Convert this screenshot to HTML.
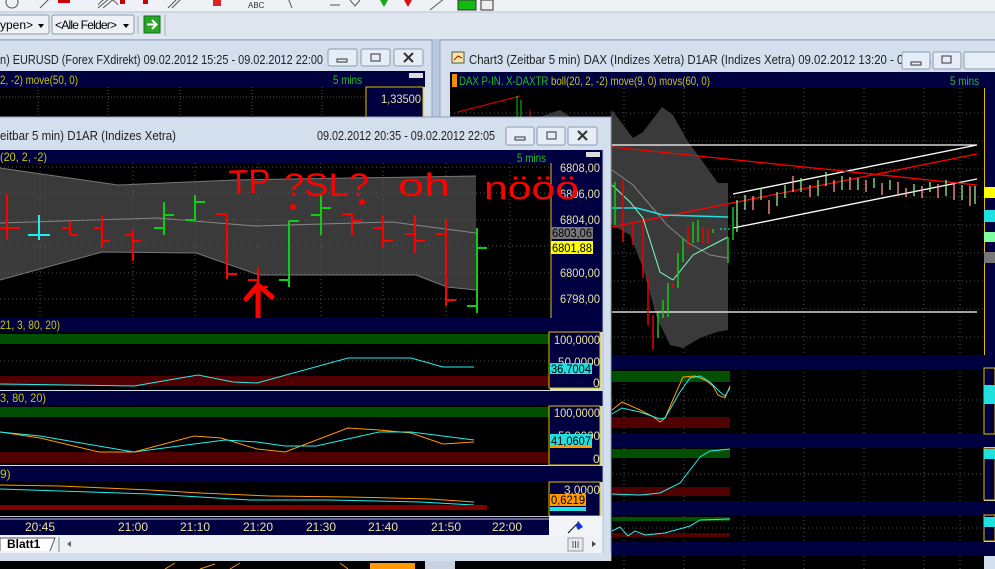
<!DOCTYPE html>
<html><head><meta charset="utf-8"><style>
html,body{margin:0;padding:0;background:#b9c9dc;}
svg{display:block;font-family:"Liberation Sans",sans-serif;}
</style></head><body>
<svg width="995" height="569" viewBox="0 0 995 569" xmlns="http://www.w3.org/2000/svg">
<!-- toolbar -->
<rect x="0" y="0" width="995" height="12" fill="#eef1f5"/>
<g stroke="#555" stroke-width="1" fill="none">
<circle cx="12" cy="2" r="6"/>
<path d="M40 8 L50 -2 M98 8 L110 -2 M103 8 L115 -2 M168 8 L178 -2 M172 8 L182 -2 M288 -2 L292 8 M330 5 L340 5 M350 0 L355 6 L360 0 M430 10 L445 -2"/>
<path d="M98 5 Q108 -8 118 5"/>
</g>
<rect x="58" y="0" width="12" height="3" fill="#c00"/>
<rect x="120" y="0" width="5" height="4" fill="#c00"/>
<rect x="143" y="0" width="5" height="4" fill="#c00"/>
<rect x="213" y="0" width="8" height="6" fill="#d22"/>
<text x="248" y="8" font-size="8" fill="#333">ABC</text>
<path d="M380 0 L388 0 L384 7Z" fill="#1a1"/><path d="M404 0 L412 0 L408 7Z" fill="#d11"/>
<rect x="458" y="0" width="18" height="10" fill="#11bb11" stroke="#333"/>
<rect x="481" y="0" width="12" height="10" fill="#eee" stroke="#333"/>
<rect x="0" y="12" width="995" height="27" fill="#dfe6ef"/>
<line x1="0" y1="12" x2="995" y2="12" fill="none" stroke="#b8c2d0"/>
<rect x="-5" y="15" width="54" height="19" rx="2" fill="#eef1f5" stroke="#8e9aaa"/>
<text x="0" y="29" font-size="12" fill="#000">ypen&gt;</text>
<path d="M38 24 L44 24 L41 28Z" fill="#000"/>
<rect x="52" y="15" width="82" height="19" rx="2" fill="#eef1f5" stroke="#8e9aaa"/>
<text x="55" y="29" font-size="12" fill="#000" textLength="62">&lt;Alle Felder&gt;</text>
<path d="M123 24 L129 24 L126 28Z" fill="#000"/>
<line x1="138" y1="16" x2="138" y2="34" stroke="#a9b3c0"/>
<rect x="144" y="16" width="16" height="17" fill="#2aa52a" stroke="#1a6a1a"/>
<path d="M147 24.5 L156 24.5 M152 20 L156.5 24.5 L152 29" stroke="#fff" stroke-width="2" fill="none"/>
<line x1="165" y1="14" x2="165" y2="36" stroke="#a9b3c0"/>

<!-- back left window -->
<rect x="-5" y="40" width="437" height="90" fill="#d3dfed" stroke="#8fa4c0"/>
<text x="0" y="64" font-size="12.5" fill="#222" textLength="323" lengthAdjust="spacingAndGlyphs">n)  EURUSD (Forex FXdirekt) 09.02.2012 15:25 - 09.02.2012 22:00</text>
<g fill="#e6edf6" stroke="#8c9bb0"><rect x="328" y="49" width="29" height="17" rx="2"/><rect x="361" y="49" width="29" height="17" rx="2"/><rect x="394" y="49" width="29" height="17" rx="2"/></g>
<rect x="337" y="59" width="10" height="3" fill="none" stroke="#333"/>
<rect x="371" y="54" width="9" height="7" fill="none" stroke="#333"/>
<path d="M404 53 L413 62 M413 53 L404 62" stroke="#333" stroke-width="2"/>
<rect x="0" y="71" width="425" height="16" fill="#000040"/>
<text x="0" y="84" font-size="12" fill="#c8c800" textLength="78" lengthAdjust="spacingAndGlyphs">2, -2) move(50, 0)</text>
<text x="333" y="84" font-size="12" fill="#20c020" textLength="29" lengthAdjust="spacingAndGlyphs">5 mins</text>
<rect x="409" y="73" width="14" height="5" fill="#ddd"/>
<rect x="0" y="87" width="366" height="33" fill="#000"/>
<rect x="366" y="87" width="57" height="33" fill="#000040" stroke="#d8c000"/>
<text x="381" y="103" font-size="12" fill="#e8e0a0" textLength="40" lengthAdjust="spacingAndGlyphs">1,33500</text>
<g stroke="#555" stroke-dasharray="1,2"><line x1="0" y1="97" x2="366" y2="97"/><line x1="38" y1="87" x2="38" y2="117"/><line x1="108" y1="87" x2="108" y2="117"/><line x1="180" y1="87" x2="180" y2="117"/><line x1="252" y1="87" x2="252" y2="117"/><line x1="322" y1="87" x2="322" y2="117"/></g>

<!-- right window -->
<rect x="440" y="40" width="560" height="530" fill="#d3dfed" stroke="#8fa4c0"/>
<rect x="452" y="52" width="12" height="11" fill="#f4e9a0" stroke="#555"/><path d="M454 60 L458 56 L462 58" stroke="#c00" fill="none"/>
<text x="469" y="64" font-size="12.5" fill="#222" textLength="466" lengthAdjust="spacingAndGlyphs">Chart3 (Zeitbar 5 min)  DAX (Indizes Xetra) D1AR (Indizes Xetra) 09.02.2012 13:20 - 09.02...</text>
<g fill="#e6edf6" stroke="#8c9bb0"><rect x="902" y="52" width="28" height="17" rx="2"/><rect x="933" y="52" width="28" height="17" rx="2"/><rect x="964" y="52" width="35" height="17" rx="2"/></g>
<rect x="911" y="62" width="10" height="3" fill="none" stroke="#333"/>
<rect x="942" y="56" width="9" height="7" fill="none" stroke="#333"/>
<rect x="450" y="72" width="545" height="16" fill="#000040"/>
<rect x="452" y="74" width="5" height="13" fill="#f09000"/>
<text x="459" y="85" font-size="12" fill="#20c020" textLength="251" lengthAdjust="spacingAndGlyphs">DAX P-IN. X-DAXTR <tspan fill="#c8c800">boll(20, 2, -2) move(9, 0) movs(60, 0)</tspan></text>
<text x="950" y="85" font-size="12" fill="#20c020" textLength="29" lengthAdjust="spacingAndGlyphs">5 mins</text>
<rect x="450" y="88" width="534" height="481" fill="#000"/>
<rect x="984" y="88" width="11" height="268" fill="#000040"/>
<line x1="984.5" y1="88" x2="984.5" y2="356" stroke="#e0c000"/>
<g stroke="#555" stroke-dasharray="1,3">
<line x1="624" y1="88" x2="624" y2="569"/><line x1="684" y1="88" x2="684" y2="569"/><line x1="744" y1="88" x2="744" y2="569"/><line x1="804" y1="88" x2="804" y2="569"/><line x1="864" y1="88" x2="864" y2="569"/><line x1="924" y1="88" x2="924" y2="569"/><line x1="960" y1="88" x2="960" y2="569"/>
<line x1="450" y1="113" x2="984" y2="113"/><line x1="450" y1="141" x2="984" y2="141"/><line x1="450" y1="169" x2="984" y2="169"/><line x1="450" y1="197" x2="984" y2="197"/><line x1="450" y1="225" x2="984" y2="225"/><line x1="450" y1="253" x2="984" y2="253"/><line x1="450" y1="281" x2="984" y2="281"/><line x1="450" y1="309" x2="984" y2="309"/><line x1="450" y1="337" x2="984" y2="337"/>
<line x1="612" y1="400" x2="984" y2="400"/><line x1="612" y1="474" x2="984" y2="474"/><line x1="612" y1="528" x2="984" y2="528"/>
</g>
<path d="M458 112 L520 96" stroke="#e00" fill="none"/>
<path d="M517 96 V117 M521 100 V117" stroke="#1c1"/>
<path d="M530 110 V117" stroke="#e00"/>
<polygon points="540,117 560,110 575,120 590,138 605,140 612,110 633,138 643,132 662,107 673,115 687,140 703,162 718,183 728,183 728,330 717,332 700,338 683,348 670,345 657,318 643,268 630,235 612,225" fill="#3a3a3a"/>
<path d="M612 170 L633 185 L650 205 L667 225 L687 242 L710 255 L728 258" stroke="#888" fill="none"/>
<path d="M612 145 L977 145 M612 312 L977 312 M733 194 L977 145 M733 228 L977 179" stroke="#fff" stroke-width="1.3" fill="none"/>
<path d="M612 147 L977 185 M612 227 L977 154" stroke="#f00" stroke-width="1.3" fill="none"/>
<path d="M612 208 L637 208 L663 215 L728 217" stroke="#20e0e0" stroke-width="1.5" fill="none"/>
<path d="M612 185 L630 202 L643 218 L660 272 L673 280 L693 255 L728 237" stroke="#7fffc0" fill="none"/>
<g stroke="#e00" stroke-width="1.5"><path d="M623 180V242 M633 222V245 M643 222V278 M648 278V325 M653 315V350 M673 283V288 M688 225V248 M703 227V243 M708 228V244"/></g>
<g stroke="#1c1" stroke-width="1.5"><path d="M615 182V225 M658 313V338 M663 300V318 M668 283V317 M678 253V288 M683 238V262 M693 222V243 M698 220V242 M713 229V233 M728 237V263 M733 207V240"/></g>
<path d="M720 229h2M724 229h2M728 229h2" stroke="#0ff"/>
<g stroke="#8fef8f" stroke-width="1.3" fill="none"><path d="M737 200V232 M745 195V210 M761 188V200 M777 192V206 M785 185V198 M801 178V192 M818 180V196 M826 172V186 M842 176V190 M858 178V190 M874 178V188 M890 180V190 M914 184V196 M930 182V192 M946 180V196 M962 185V200 M975 186V204"/></g>
<g stroke="#ff9a9a" stroke-width="1.3" fill="none"><path d="M753 196V210 M769 200V214 M793 176V192 M810 185V197 M834 180V192 M850 177V190 M866 180V192 M882 183V195 M898 182V196 M906 188V197 M922 186V198 M938 184V198 M954 184V200 M970 186V206"/></g>
<rect x="984" y="187" width="11" height="11" fill="#ff0"/><rect x="984" y="210" width="11" height="12" fill="#20e0e0"/><rect x="984" y="232" width="11" height="10" fill="#7fffa0"/><rect x="984" y="252" width="11" height="11" fill="#777"/>
<!-- right lower panels -->
<rect x="612" y="355" width="383" height="14" fill="#000040"/>
<rect x="612" y="371" width="118" height="11" fill="#005000"/><rect x="612" y="417" width="118" height="11" fill="#500000"/>
<rect x="612" y="433" width="383" height="14" fill="#000040"/>
<rect x="612" y="449" width="118" height="9" fill="#005000"/><rect x="612" y="487" width="118" height="9" fill="#500000"/>
<rect x="612" y="501" width="383" height="14" fill="#000040"/>
<rect x="612" y="517" width="118" height="4" fill="#005000"/><rect x="612" y="533" width="118" height="4" fill="#500000"/>
<rect x="612" y="542" width="383" height="14" fill="#000040"/>
<path d="M612 410 L622 402 L640 410 L652 416 L660 422 L665 418 L675 395 L683 377 L695 376 L705 380 L713 386 L718 395 L725 398 L730 386" stroke="#f90" fill="none"/>
<path d="M612 414 L622 408 L640 412 L660 419 L665 418 L680 392 L690 378 L700 376 L710 382 L720 392 L725 396 L730 388" stroke="#2ee" fill="none"/>
<path d="M612 494 L640 495 L660 493 L680 483 L690 470 L700 457 L710 451 L730 449" stroke="#2ee" fill="none"/>
<path d="M612 531 L620 527 L628 536 L635 531 L645 535 L665 533 L690 526 L700 520 L730 519" stroke="#2ee" fill="none"/>
<rect x="984" y="368" width="11" height="66" fill="#000040" stroke="#e0c000"/>
<rect x="984" y="385" width="11" height="19" fill="#20e0e0"/>
<rect x="984" y="448" width="11" height="52" fill="#000040" stroke="#e0c000"/>
<rect x="984" y="449" width="11" height="10" fill="#20e0e0"/>
<rect x="984" y="515" width="11" height="26" fill="#000040" stroke="#e0c000"/>
<rect x="984" y="517" width="11" height="10" fill="#20e0e0"/>

<!-- front window -->
<rect x="-6" y="117" width="617" height="444" fill="#d3dfed" stroke="#8fa4c0"/>
<text x="0" y="140" font-size="12.5" fill="#222" textLength="176" lengthAdjust="spacingAndGlyphs">eitbar 5 min)  D1AR (Indizes Xetra)</text>
<text x="317" y="140" font-size="12.5" fill="#222" textLength="178" lengthAdjust="spacingAndGlyphs">09.02.2012 20:35 - 09.02.2012 22:05</text>
<g fill="#e6edf6" stroke="#8c9bb0"><rect x="506" y="127" width="28" height="18" rx="2"/><rect x="537" y="127" width="28" height="18" rx="2"/><rect x="568" y="127" width="29" height="18" rx="2"/></g>
<rect x="515" y="137" width="10" height="3" fill="none" stroke="#333"/>
<rect x="547" y="132" width="9" height="7" fill="none" stroke="#333"/>
<path d="M578 131 L587 140 M587 131 L578 140" stroke="#333" stroke-width="2"/>
<rect x="0" y="150" width="603" height="14" fill="#000040"/>
<text x="0" y="161" font-size="12" fill="#c8c800" textLength="47" lengthAdjust="spacingAndGlyphs">(20, 2, -2)</text>
<text x="517" y="162" font-size="12" fill="#20c020" textLength="29" lengthAdjust="spacingAndGlyphs">5 mins</text>
<rect x="586" y="152" width="14" height="5" fill="#ddd"/>
<rect x="0" y="163" width="550" height="155" fill="#000"/>
<polygon points="0,168 118,185 235,180 476,176 476,290 447,287 416,275 259,275 196,253 102,252 0,280" fill="#3a3a3a"/>
<path d="M0 168 L118 185 L235 180 L476 176 M0 280 L102 252 L196 253 L259 275 L416 275 L447 287 L476 290" stroke="#777" fill="none"/>
<path d="M0 223 L157 218 L255 226 L392 222 L476 233" stroke="#888" fill="none"/>
<g stroke="#555" stroke-dasharray="1,3">
<line x1="0" y1="167" x2="550" y2="167"/><line x1="0" y1="193" x2="550" y2="193"/><line x1="0" y1="220" x2="550" y2="220"/><line x1="0" y1="246" x2="550" y2="246"/><line x1="0" y1="273" x2="550" y2="273"/><line x1="0" y1="299" x2="550" y2="299"/>
<line x1="40" y1="163" x2="40" y2="516"/><line x1="133" y1="163" x2="133" y2="516"/><line x1="195" y1="163" x2="195" y2="516"/><line x1="258" y1="163" x2="258" y2="516"/><line x1="321" y1="163" x2="321" y2="516"/><line x1="383" y1="163" x2="383" y2="516"/><line x1="446" y1="163" x2="446" y2="516"/><line x1="510" y1="163" x2="510" y2="516"/>
</g>
<g stroke="#f00" stroke-width="2" fill="none">
<path d="M7 194V240 M7 228H20 M0 228H7"/>
<path d="M70 221V235 M62 228H70 M70 235H78"/>
<path d="M102 216V248 M94 228H102 M102 241H110"/>
<path d="M133 230V261 M125 235H133 M133 241H141"/>
<path d="M227 214V279 M216 214H227 M227 274H237"/>
<path d="M258 267V287 M248 280H258 M258 287H268"/>
<path d="M352 214V235 M342 214H352 M352 221H362"/>
<path d="M383 215V248 M373 228H383 M383 241H393"/>
<path d="M415 215V253 M405 234H415 M415 241H425"/>
<path d="M446 220V306 M436 234H446 M446 300H456"/>
</g>
<path d="M39 215V240 M28 235H50" stroke="#2ee" stroke-width="2"/>
<g stroke="#1c1" stroke-width="2" fill="none">
<path d="M164 202V235 M154 228H164 M164 215H174"/>
<path d="M195 195V220 M185 220H195 M195 202H205"/>
<path d="M289 221V287 M279 280H289 M289 221H299"/>
<path d="M321 195V235 M311 215H321 M321 208H331"/>
<path d="M477 228V313 M467 306H477 M477 248H487"/>
</g>
<!-- front price axis -->
<rect x="550" y="163" width="53" height="155" fill="#000040"/>
<line x1="551" y1="163" x2="551" y2="318" stroke="#e0c000"/>
<g font-size="12" fill="#e8e0a0"><text x="560" y="172" textLength="40" lengthAdjust="spacingAndGlyphs">6808,00</text><text x="560" y="198" textLength="40" lengthAdjust="spacingAndGlyphs">6806,00</text><text x="560" y="224" textLength="40" lengthAdjust="spacingAndGlyphs">6804,00</text><text x="560" y="277" textLength="40" lengthAdjust="spacingAndGlyphs">6800,00</text><text x="560" y="303" textLength="40" lengthAdjust="spacingAndGlyphs">6798,00</text></g>
<rect x="551" y="227" width="42" height="12" fill="#777"/><text x="552" y="237" font-size="12" fill="#000" textLength="40" lengthAdjust="spacingAndGlyphs">6803,06</text>
<rect x="551" y="241" width="42" height="13" fill="#ff0"/><text x="552" y="252" font-size="12" fill="#000" textLength="40" lengthAdjust="spacingAndGlyphs">6801,88</text>
<!-- handwriting -->
<g fill="#f00" font-family="'Liberation Sans',sans-serif">
<text x="229" y="194" font-size="34" transform="rotate(-2 229 194)" textLength="42" lengthAdjust="spacingAndGlyphs">TP</text>
<text x="284" y="196" font-size="32" textLength="85" lengthAdjust="spacingAndGlyphs">?SL?</text>
<text x="398" y="196" font-size="32" textLength="52" lengthAdjust="spacingAndGlyphs">oh</text>
<text x="484" y="199" font-size="32" textLength="95" lengthAdjust="spacingAndGlyphs">nööö</text>
</g>
<g fill="#f00"><circle cx="293" cy="207" r="3"/><circle cx="362" cy="202" r="3"/></g>
<path d="M258 318 L258 285 M246 299 L258 285 L272 297" stroke="#f00" stroke-width="5" fill="none" stroke-linecap="round"/>
<!-- indicators -->
<rect x="0" y="318" width="603" height="14" fill="#000040"/>
<text x="0" y="329" font-size="12" fill="#c8c800" textLength="60" lengthAdjust="spacingAndGlyphs">21, 3, 80, 20)</text>
<rect x="0" y="332" width="550" height="58" fill="#000"/>
<rect x="0" y="334" width="549" height="10" fill="#005000"/><rect x="0" y="376" width="549" height="10" fill="#500000"/>
<g stroke="#555" stroke-dasharray="1,3"><line x1="0" y1="361" x2="549" y2="361"/><line x1="0" y1="435" x2="549" y2="435"/><line x1="0" y1="498" x2="549" y2="498"/></g>
<path d="M0 384 L134 386 L198 375 L233 382 L257 383 L348 358 L411 358 L443 367 L474 367" stroke="#2ee" fill="none"/>
<rect x="549" y="332" width="51" height="56" fill="#000040" stroke="#e0c000"/>
<g font-size="12" fill="#e8e0a0"><text x="554" y="344" textLength="46" lengthAdjust="spacingAndGlyphs">100,0000</text><text x="558" y="366" textLength="42" lengthAdjust="spacingAndGlyphs">50,0000</text><text x="593" y="387">0</text></g>
<rect x="550" y="363" width="42" height="11" fill="#20e0e0"/><text x="551" y="373" font-size="12" fill="#000" textLength="40" lengthAdjust="spacingAndGlyphs">36,7004</text>
<rect x="0" y="391" width="603" height="15" fill="#000040"/>
<text x="0" y="402" font-size="12" fill="#c8c800" textLength="46" lengthAdjust="spacingAndGlyphs">3, 80, 20)</text>
<rect x="0" y="406" width="550" height="59" fill="#000"/>
<rect x="0" y="407" width="549" height="10" fill="#005000"/><rect x="0" y="452" width="549" height="11" fill="#500000"/>
<path d="M0 432 L40 438 L99 452 L134 452 L194 436 L221 438 L257 449 L285 452 L348 428 L379 430 L411 433 L443 444 L474 442" stroke="#f90" fill="none"/>
<path d="M0 432 L40 436 L134 452 L194 444 L225 440 L257 442 L285 446 L316 446 L379 432 L411 432 L443 436 L474 440" stroke="#2ee" fill="none"/>
<rect x="549" y="406" width="51" height="59" fill="#000040" stroke="#e0c000"/>
<g font-size="12" fill="#e8e0a0"><text x="554" y="417" textLength="46" lengthAdjust="spacingAndGlyphs">100,0000</text><text x="558" y="440" textLength="42" lengthAdjust="spacingAndGlyphs">50,0000</text><text x="593" y="463">0</text></g>
<rect x="550" y="434" width="42" height="13" fill="#20e0e0"/><rect x="550" y="446" width="42" height="2" fill="#f90"/><text x="551" y="445" font-size="12" fill="#000" textLength="40" lengthAdjust="spacingAndGlyphs">41,0607</text>
<rect x="0" y="466" width="603" height="16" fill="#000040"/>
<text x="0" y="478" font-size="12" fill="#c8c800">9)</text>
<rect x="0" y="482" width="550" height="34" fill="#000"/>
<path d="M0 485 L60 486 L150 490 L200 493 L270 496 L350 497 L430 499 L474 502" stroke="#f90" fill="none"/>
<path d="M0 489 L60 491 L150 494 L200 497 L250 500 L330 500 L420 502 L474 505" stroke="#2ee" fill="none"/>
<rect x="0" y="505" width="487" height="5" fill="#800000"/>
<rect x="549" y="482" width="51" height="34" fill="#000040" stroke="#e0c000"/>
<text x="564" y="494" font-size="12" fill="#e8e0a0" textLength="36" lengthAdjust="spacingAndGlyphs">3,0000</text>
<rect x="550" y="494" width="36" height="12" fill="#f90"/><text x="551" y="504" font-size="12" fill="#000" textLength="34" lengthAdjust="spacingAndGlyphs">0,6219</text>
<rect x="550" y="507" width="36" height="4" fill="#20e0e0"/>
<!-- time axis -->
<rect x="0" y="516" width="549" height="19" fill="#000040"/>
<path d="M0 516.5H549 M0 519H549" stroke="#fff" stroke-width="0.8"/>
<g font-size="12" fill="#e8e0a0" text-anchor="middle"><text x="40" y="531">20:45</text><text x="133" y="531">21:00</text><text x="195" y="531">21:10</text><text x="258" y="531">21:20</text><text x="321" y="531">21:30</text><text x="383" y="531">21:40</text><text x="446" y="531">21:50</text><text x="507" y="531">22:00</text></g>
<rect x="549" y="516" width="54" height="19" fill="#f2f4f7"/>
<path d="M568 533 L579 522" stroke="#000"/><path d="M578 521 L583 527 L578 530 L576 526Z" fill="#1030d0"/>
<!-- tab bar -->
<rect x="0" y="535" width="603" height="18" fill="#eef1f5"/>
<path d="M0 551 L0 538 L55 538 L50 551" fill="#fff" stroke="#555"/>
<text x="7" y="548" font-size="12" font-weight="bold" fill="#000">Blatt1</text>
<line x1="59" y1="537" x2="59" y2="552" stroke="#888"/>
<path d="M71 541 L67 544 L71 547Z" fill="#666"/>
<rect x="568" y="538" width="15" height="13" fill="#e6eaf0" stroke="#999"/>
<path d="M573 541V548 M575.5 541V548 M578 541V548" stroke="#555"/>
<path d="M592 541 L596 544 L592 547Z" fill="#444"/>
<rect x="-6" y="553" width="617" height="8" fill="#d3dfed"/>
<line x1="603" y1="150" x2="603" y2="553" stroke="#b0c0d4"/>
<!-- bottom below window -->
<rect x="0" y="561" width="612" height="8" fill="#000"/>
<path d="M165 569 L175 563 M200 569 L215 564 M230 569 L240 563 M340 563 L348 569" stroke="#f90"/>
<rect x="370" y="563" width="45" height="6" fill="#f90"/>
<rect x="425" y="561" width="30" height="8" fill="#c8d2e0"/>
</svg>
</body></html>
